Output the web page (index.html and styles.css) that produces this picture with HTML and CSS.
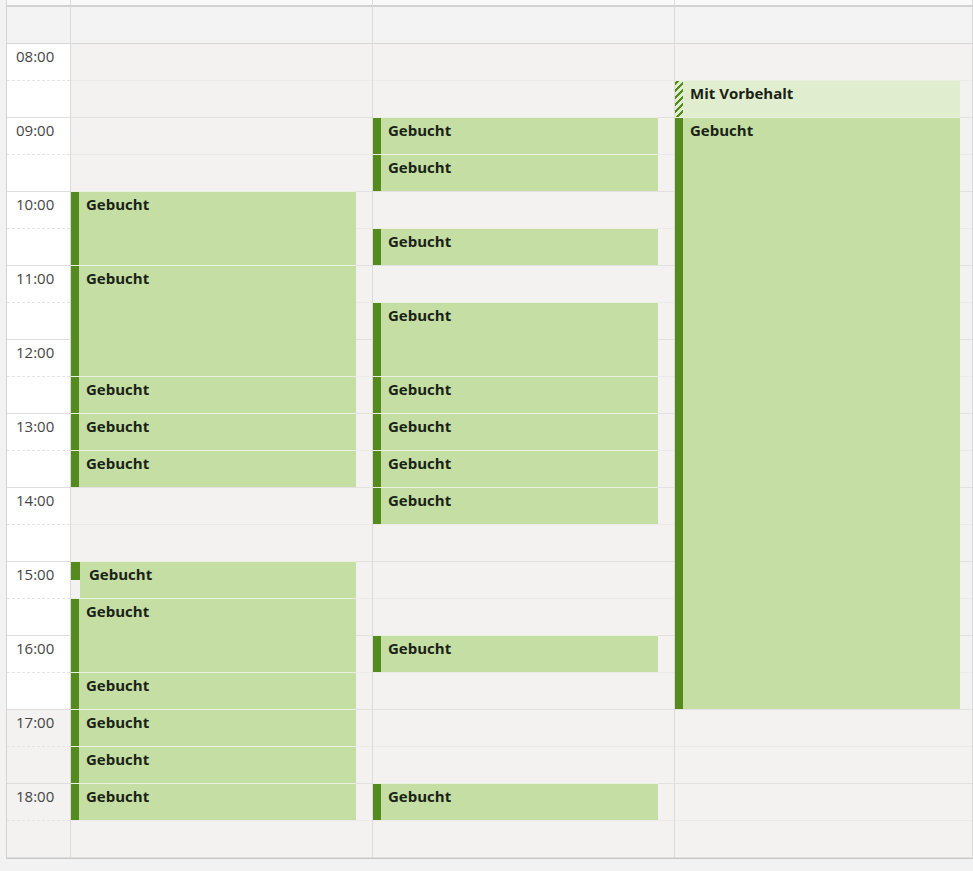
FILE: index.html
```html
<!DOCTYPE html>
<html lang="de">
<head>
  <meta charset="UTF-8">
  <title>Kalender</title>
  <link rel="stylesheet" href="styles.css">
</head>
<body>
  <!-- Tagesansicht mit Zeitleiste und drei Ressourcen-Spalten -->
  <div class="calendar">
    <div class="col gutter">
      <div class="stub"></div>
      <div class="allday"></div>
      <div class="slots" id="times"></div>
    </div>
    <div class="col day">
      <div class="stub"></div>
      <div class="allday"></div>
      <div class="slots" id="day-1"></div>
    </div>
    <div class="col day">
      <div class="stub"></div>
      <div class="allday"></div>
      <div class="slots" id="day-2"></div>
    </div>
    <div class="col day">
      <div class="stub"></div>
      <div class="allday"></div>
      <div class="slots" id="day-3"></div>
    </div>
  </div>

  <script>
    // 08:00 bis 19:00 in halben Stunden
    const SLOT_COUNT = 22;
    const SLOT_HEIGHT = 37;

    // [Start-Slot, Anzahl Slots, Text, Variante]
    const events = {
      'day-1': [[4, 2], [6, 3], [9, 1], [10, 1], [11, 1], [14, 1, 'Gebucht', 'split'],
                [15, 2], [17, 1], [18, 1], [19, 1], [20, 1]],
      'day-2': [[2, 1], [3, 1], [5, 1], [7, 2], [9, 1], [10, 1], [11, 1], [12, 1],
                [16, 1], [20, 1]],
      'day-3': [[1, 1, 'Mit Vorbehalt', 'tentative'], [2, 16]]
    };

    function buildSlots(container, withLabels) {
      for (let i = 0; i < SLOT_COUNT; i++) {
        const slot = document.createElement('div');
        slot.className = 'slot ' + (i % 2 === 0 ? 'half' : 'hour');
        if (i < 18) slot.classList.add('work');
        if (withLabels && i % 2 === 0) {
          const hour = 8 + i / 2;
          slot.textContent = (hour < 10 ? '0' : '') + hour + ':00';
        }
        container.appendChild(slot);
      }
    }

    buildSlots(document.getElementById('times'), true);

    Object.keys(events).forEach(function (id) {
      const container = document.getElementById(id);
      buildSlots(container, false);
      events[id].forEach(function (ev) {
        const item = document.createElement('div');
        item.className = 'event' + (ev[3] ? ' ' + ev[3] : '');
        item.style.top = (ev[0] * SLOT_HEIGHT - 1) + 'px';
        item.style.height = (ev[1] * SLOT_HEIGHT) + 'px';
        item.innerHTML = '<div class="bar"></div><div class="title">' + (ev[2] || 'Gebucht') + '</div>';
        container.appendChild(item);
      });
    });
  </script>
</body>
</html>
```

FILE: styles.css
```css
body {
  margin: 0;
  background-color: #f2f2f2;
  font-family: "Open Sans", "Noto Sans", Arial, sans-serif;
}
/* Raster */
.calendar {
  display: grid;
  grid-template-columns: 64px 302px 302px 1fr;
  margin-left: 6px;
  border-left: 1px solid #d4d4d4;
  border-bottom: 1px solid #c6c6c6;
  background-color: #f3f2f1;
}
.col {
  border-right: 1px solid #dadada;
}
.stub {
  height: 5px;
  background-color: #f9f9f9;
}
.allday {
  height: 36px;
  border-top: 2px solid #d2d2d2;
  border-bottom: 1px solid #d6d6d6;
  background-color: #f3f3f3;
}
.slots {
  position: relative;
}
.slot {
  height: 36px;
  border-bottom: 1px solid #e2e1df;
}
.slot.half {
  border-bottom-color: #ebeae8;
}
.slot.hour:last-child {
  border-bottom: 1px solid #d0d0d0;
}
/* Zeitleiste */
.gutter .slot {
  box-sizing: border-box;
  height: 37px;
  padding: 2px 0 0 9px;
  font-size: 15px;
  line-height: 20px;
  color: #454545;
  background-color: #f3f2f1;
}
.gutter .slot.work {
  background-color: #ffffff;
}
.gutter .slot.half {
  border-bottom: 1px dashed #e4e4e4;
}
.gutter .slot.hour {
  border-bottom: 1px solid #dedede;
}
/* Termine */
.event {
  position: absolute;
  left: 0;
  width: 285px;
  box-sizing: border-box;
  display: flex;
  background-color: #c4dea4;
  border-top: 1px solid #eaf2df;
}
.event .bar {
  width: 8px;
  flex-shrink: 0;
  background-color: #558b1e;
}
.event .title {
  padding: 2px 0 0 7px;
  font-size: 15px;
  line-height: 20px;
  font-weight: 700;
  color: #1a2214;
}
.event.tentative {
  background-color: #e1edcf;
}
.event.tentative .bar {
  background: repeating-linear-gradient(-45deg, #e1edcf 0 3px, #558b1e 3px 5px);
}
/* Termin mit halbem Balken */
.event.split {
  background: linear-gradient(to right, transparent 9px, #c4dea4 9px);
}
.event.split .bar {
  height: 18px;
  width: 9px;
}
.event.split .title {
  padding-left: 9px;
}
```
